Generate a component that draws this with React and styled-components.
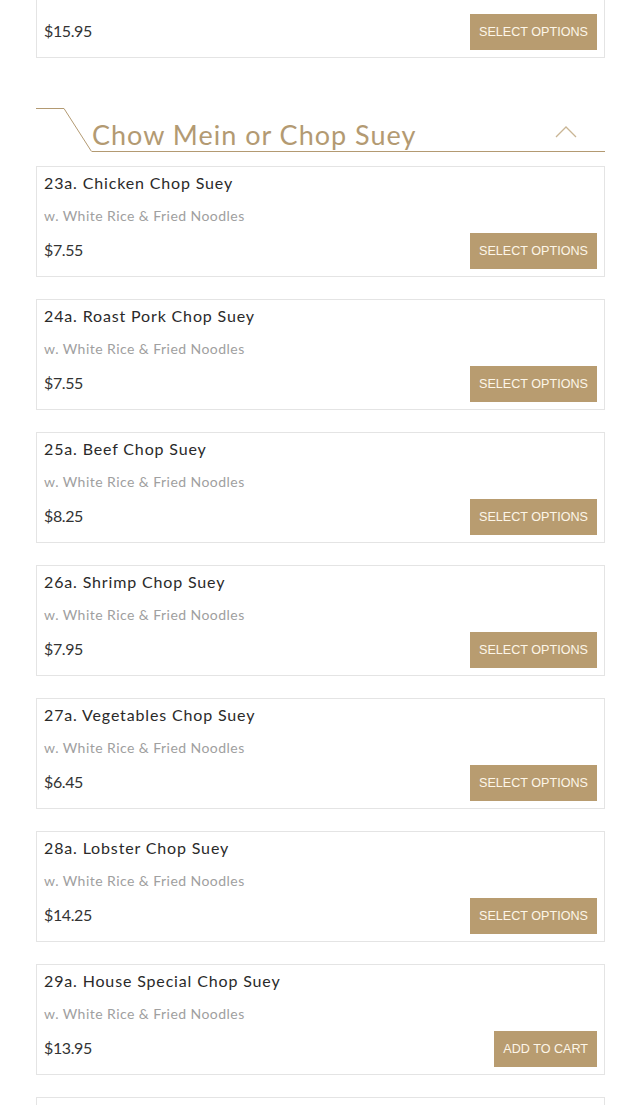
import React from "react";
import styled, { createGlobalStyle } from "styled-components";

const Global = createGlobalStyle`
  html, body { margin: 0; padding: 0; background: #fff; }
  body { font-family: "Lato", "Noto Sans", sans-serif; color: #333; }
  * { box-sizing: border-box; }
`;

const Page = styled.div`
  width: 635px;
  padding: 0 30px 0 36px;
  margin-top: -66px;
`;

const Card = styled.div`
  width: 569px;
  border: 1px solid #e4e4e4;
  padding: 7px;
  margin-bottom: 22px;
  display: flex;
  flex-direction: column;
`;

const ItemTitle = styled.div`
  font-size: 16px;
  line-height: 18px;
  color: #2a2a2a;
  letter-spacing: 0.85px;
`;

const ItemDesc = styled.div`
  font-size: 14px;
  line-height: 20px;
  margin-top: 14px;
  color: #a0a0a0;
  letter-spacing: 0.45px;
`;

const Row = styled.div`
  margin-top: ${(p) => (p.$wide ? "20px" : "7px")};
  height: 36px;
  display: flex;
  align-items: center;
  justify-content: space-between;
`;

const Price = styled.div`
  font-size: 16px;
  color: #333;
  letter-spacing: -0.4px;
  padding-bottom: 3px;
`;

const Button = styled.button`
  height: 36px;
  border: none;
  background: #b89c70;
  color: #fdf6e8;
  font-family: "Liberation Sans", Arial, sans-serif;
  font-size: 12.6px;
  text-transform: uppercase;
  padding: 0 9px;
  cursor: pointer;
`;

const Header = styled.div`
  display: flex;
  align-items: stretch;
  width: 569px;
  height: 44px;
  margin-top: 50px;
  margin-bottom: 14px;
`;

const Notch = styled.svg`
  flex: 0 0 56px;
  display: block;
`;

const HeaderBar = styled.div`
  flex: 1;
  display: flex;
  align-items: flex-end;
  justify-content: space-between;
  border-bottom: 1px solid #b39a72;
`;

const HeaderTitle = styled.h2`
  margin: 0;
  font-weight: 400;
  font-size: 27px;
  line-height: 30px;
  color: #b39a72;
  letter-spacing: 1px;
  padding-bottom: 1px;
`;

const Chevron = styled.svg`
  display: block;
  margin: 0 28px 13px 0;
`;

const before = { title: "22. House Special Chow Mein", price: "$15.95", action: "Select Options", wide: true };

const items = [
  { title: "23a. Chicken Chop Suey", price: "$7.55", action: "Select Options" },
  { title: "24a. Roast Pork Chop Suey", price: "$7.55", action: "Select Options" },
  { title: "25a. Beef Chop Suey", price: "$8.25", action: "Select Options" },
  { title: "26a. Shrimp Chop Suey", price: "$7.95", action: "Select Options" },
  { title: "27a. Vegetables Chop Suey", price: "$6.45", action: "Select Options" },
  { title: "28a. Lobster Chop Suey", price: "$14.25", action: "Select Options" },
  { title: "29a. House Special Chop Suey", price: "$13.95", action: "Add to Cart" },
  { title: "30a. Chicken Chow Mein", price: "$7.55", action: "Select Options" },
];

function Item({ title, desc = "w. White Rice & Fried Noodles", price, action, wide }) {
  return (
    <Card>
      <ItemTitle>{title}</ItemTitle>
      <ItemDesc>{desc}</ItemDesc>
      <Row $wide={wide}>
        <Price>{price}</Price>
        <Button>{action}</Button>
      </Row>
    </Card>
  );
}

export default function App() {
  return (
    <>
      <Global />
      <Page>
        <Item {...before} />
        <Header>
          <Notch width="56" height="44" viewBox="0 0 56 44">
            <polyline points="0,0.5 28,0.5 55.5,43.5" fill="none" stroke="#b39a72" strokeWidth="1" />
          </Notch>
          <HeaderBar>
            <HeaderTitle>Chow Mein or Chop Suey</HeaderTitle>
            <Chevron width="22" height="13" viewBox="0 0 22 13">
              <polyline points="1,12 11,2 21,12" fill="none" stroke="#c9b594" strokeWidth="1.3" />
            </Chevron>
          </HeaderBar>
        </Header>
        {items.map((it) => (
          <Item key={it.title} {...it} />
        ))}
      </Page>
    </>
  );
}
